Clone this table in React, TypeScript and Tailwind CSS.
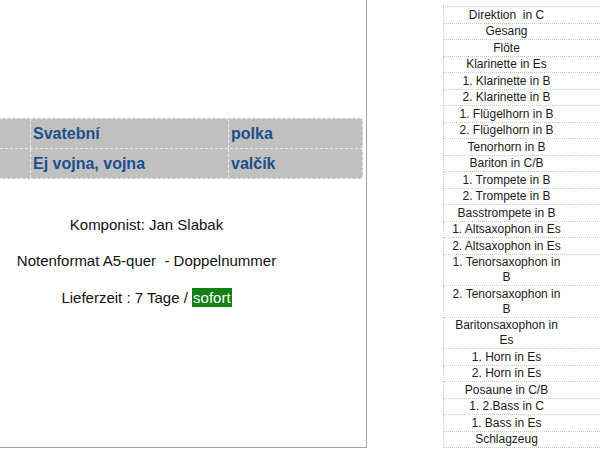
import React from 'react';

const parts: string[] = [
  'Direktion\u00a0 in C',
  'Gesang',
  'Flöte',
  'Klarinette in Es',
  '1. Klarinette in B',
  '2. Klarinette in B',
  '1. Flügelhorn in B',
  '2. Flügelhorn in B',
  'Tenorhorn in B',
  'Bariton in C/B',
  '1. Trompete in B',
  '2. Trompete in B',
  'Basstrompete in B',
  '1. Altsaxophon in Es',
  '2. Altsaxophon in Es',
  '1. Tenorsaxophon in B',
  '2. Tenorsaxophon in B',
  'Baritonsaxophon in Es',
  '1. Horn in Es',
  '2. Horn in Es',
  'Posaune in C/B',
  '1. 2.Bass in C',
  '1. Bass in Es',
  'Schlagzeug',
];

const songs = [
  { title: 'Svatební', kind: 'polka' },
  { title: 'Ej vojna, vojna', kind: 'valčík' },
];

const App: React.FC = () => {
  return (
    <div className="w-[600px] h-[449px] overflow-hidden flex bg-white font-['Liberation_Sans',Arial,sans-serif] text-[#111]">
      {/* linke Spalte: Titel und Infos */}
      <div className="w-[367px] h-[448px] shrink-0 border-r border-b border-[#a3a3a3] pt-[118px]">
        <div className="w-[363px] bg-[#c0c0c0] border-t border-dashed border-[#ececec]">
          {songs.map((s) => (
            <div key={s.title} className="flex h-[30px] border-b border-dashed border-[#ececec]">
              <div className="w-[31px] border-r border-dashed border-[#ececec]" />
              <div className="w-[198px] flex items-center pl-[2px] border-r border-dashed border-[#ececec] text-[16px] font-bold text-[#1d4f8c]">
                {s.title}
              </div>
              <div className="flex-1 flex items-center pl-[2px] border-r border-dashed border-[#ececec] text-[16px] font-bold text-[#1d4f8c]">
                {s.kind}
              </div>
            </div>
          ))}
        </div>

        <div className="w-[293px] mt-[37px] flex flex-col gap-[18px] text-center text-[15px] leading-[18px]">
          <div>Komponist: Jan Slabak</div>
          <div>Notenformat A5-quer{'\u00a0'} - Doppelnummer</div>
          <div>
            Lieferzeit : 7 Tage /{' '}
            <span className="inline-block bg-[#138013] text-white leading-[19px] px-px">sofort</span>
          </div>
        </div>
      </div>

      {/* rechte Spalte: Stimmen */}
      <div className="flex-1 pl-[76px] pt-[6px]">
        <div className="border-t border-dotted border-[#c8c8c8]">
          {parts.map((p) => (
            <div key={p} className="flex">
              <div className="w-[126px] shrink-0 px-[5px] pt-[0.5px] border-l border-b border-dotted border-[#c8c8c8] text-center text-[12px] leading-[15px] text-[#1a1a1a]">
                {p}
              </div>
              <div className="flex-1 border-b border-dotted border-[#c8c8c8]" />
            </div>
          ))}
        </div>
      </div>
    </div>
  );
};

export default App;
